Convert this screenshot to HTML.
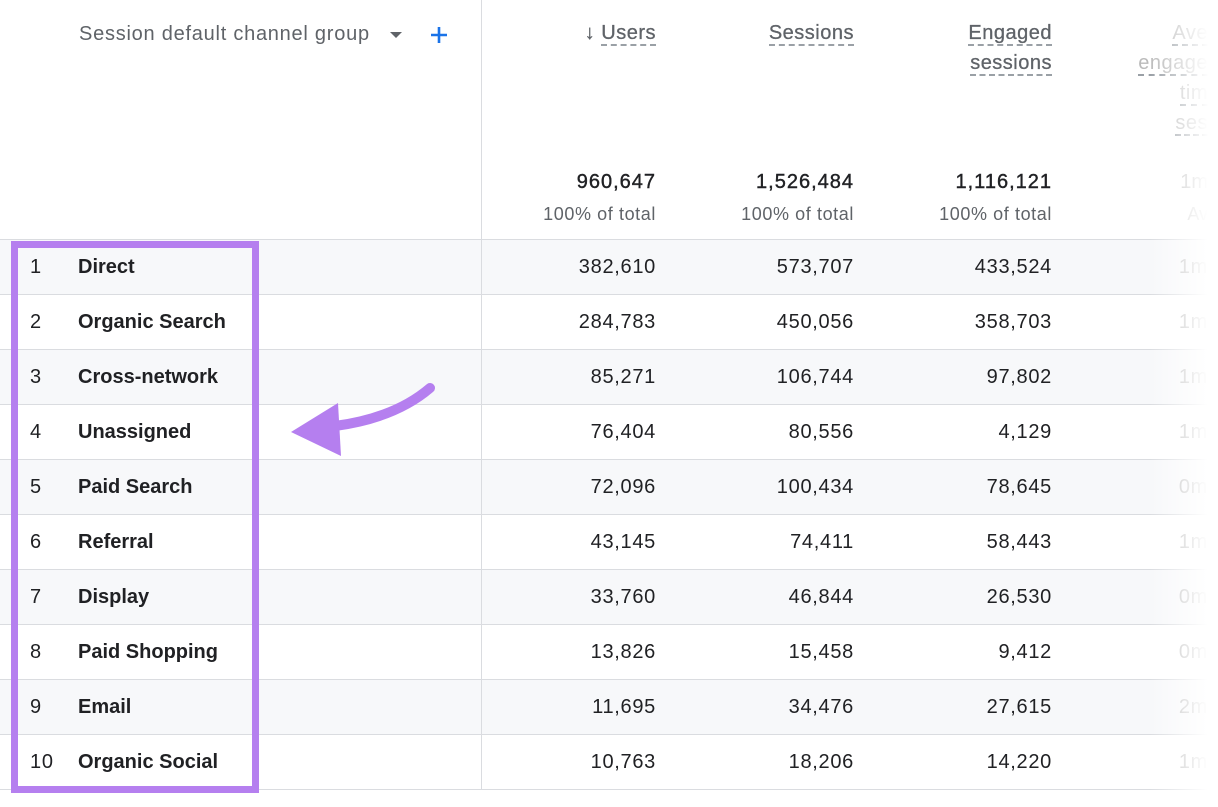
<!DOCTYPE html>
<html><head><style>
body{margin:0;width:1218px;height:807px;background:#fff;position:relative;overflow:hidden;font-family:"Liberation Sans",Arial,sans-serif;}
.a{position:absolute;white-space:nowrap}
.row{position:absolute;left:0;width:1218px;height:55px;border-top:1px solid #dadce0;}
.sh{background:#f7f8fa}
.n{position:absolute;font-size:20px;color:#202124;text-align:right;line-height:24px;letter-spacing:.7px}
.hd{font-size:20px;color:#5f6368;text-align:right;line-height:30px;letter-spacing:.5px}
.hd span{border-bottom:2px dashed #9aa0a6}
.tot{font-size:20px;color:#202124;letter-spacing:1px;-webkit-text-stroke:.4px #202124}
</style></head><body>
<div class="a" style="left:79px;top:23px;font-size:20px;color:#5f6368;letter-spacing:.75px">Session default channel group</div>
<svg class="a" style="left:388px;top:30px" width="16" height="10"><path d="M2 2h12l-6 6z" fill="#5f6368"/></svg>
<svg class="a" style="left:429px;top:25px" width="20" height="20"><path d="M10 2v16M2 10h16" stroke="#1a73e8" stroke-width="2.6"/></svg>
<div class="a" style="left:481px;top:0;width:1px;height:790px;background:#dadce0;z-index:3"></div>

<div class="a hd" style="right:562px;top:18px;-webkit-text-stroke:.3px #5f6368"><span style="border:none">↓ </span><span>Users</span></div>
<div class="a hd" style="right:364px;top:18px;-webkit-text-stroke:.3px #5f6368"><span>Sessions</span></div>
<div class="a hd" style="right:166px;top:18px;text-align:right;-webkit-text-stroke:.3px #5f6368"><span>Engaged</span><br><span>sessions</span></div>
<div class="a hd" style="right:10px;top:18px;color:#bbb"><span>Ave</span><br><span>engage</span><br><span>tim</span><br><span>ses</span></div>

<div class="a tot" style="right:562px;top:171px">960,647</div>
<div class="a tot" style="right:364px;top:171px">1,526,484</div>
<div class="a tot" style="right:166px;top:171px">1,116,121</div>
<div class="a" style="right:10px;top:171px;font-size:20px;color:#bbb">1m</div>
<div class="a" style="right:562px;top:204px;font-size:18px;color:#5f6368;letter-spacing:.6px">100% of total</div>
<div class="a" style="right:364px;top:204px;font-size:18px;color:#5f6368;letter-spacing:.6px">100% of total</div>
<div class="a" style="right:166px;top:204px;font-size:18px;color:#5f6368;letter-spacing:.6px">100% of total</div>
<div class="a" style="right:10px;top:204px;font-size:18px;color:#ccc">Av</div>

<div id="rows"></div>
<script>
var d=[["Direct","382,610","573,707","433,524","1m"],["Organic Search","284,783","450,056","358,703","1m"],["Cross-network","85,271","106,744","97,802","1m"],["Unassigned","76,404","80,556","4,129","1m"],["Paid Search","72,096","100,434","78,645","0m"],["Referral","43,145","74,411","58,443","1m"],["Display","33,760","46,844","26,530","0m"],["Paid Shopping","13,826","15,458","9,412","0m"],["Email","11,695","34,476","27,615","2m"],["Organic Social","10,763","18,206","14,220","1m"]];
var h="";
d.forEach(function(r,i){var t=239+i*55;
h+='<div class="row'+(i%2==0?' sh':'')+'" style="top:'+t+'px"></div>';
var y=t+16;
h+='<div class="a n" style="left:30px;top:'+y+'px;text-align:left">'+(i+1)+'</div>';
h+='<div class="a n" style="left:78px;top:'+y+'px;text-align:left;font-weight:bold;color:#202124;letter-spacing:0">'+r[0]+'</div>';
h+='<div class="a n" style="right:562px;top:'+y+'px">'+r[1]+'</div>';
h+='<div class="a n" style="right:364px;top:'+y+'px">'+r[2]+'</div>';
h+='<div class="a n" style="right:166px;top:'+y+'px">'+r[3]+'</div>';
h+='<div class="a n" style="right:10px;top:'+y+'px;color:#bbb">'+r[4]+'</div>';});
h+='<div class="row" style="top:789px;height:1px"></div>';
document.getElementById("rows").innerHTML=h;
</script>
<div class="a" style="left:1150px;top:0;width:68px;height:807px;background:linear-gradient(90deg,rgba(255,255,255,0),#fff 85%);z-index:2"></div>
<div class="a" style="left:11px;top:241px;width:234px;height:538px;border:7px solid #b57fef;z-index:4"></div>
<svg class="a" style="left:0;top:0;z-index:4" width="1218" height="807"><path d="M430 388 Q395 418 335 426" stroke="#b57fef" stroke-width="10" fill="none" stroke-linecap="round"/><path d="M291 432 L338 403 L341 456 Z" fill="#b57fef"/></svg>
</body></html>
